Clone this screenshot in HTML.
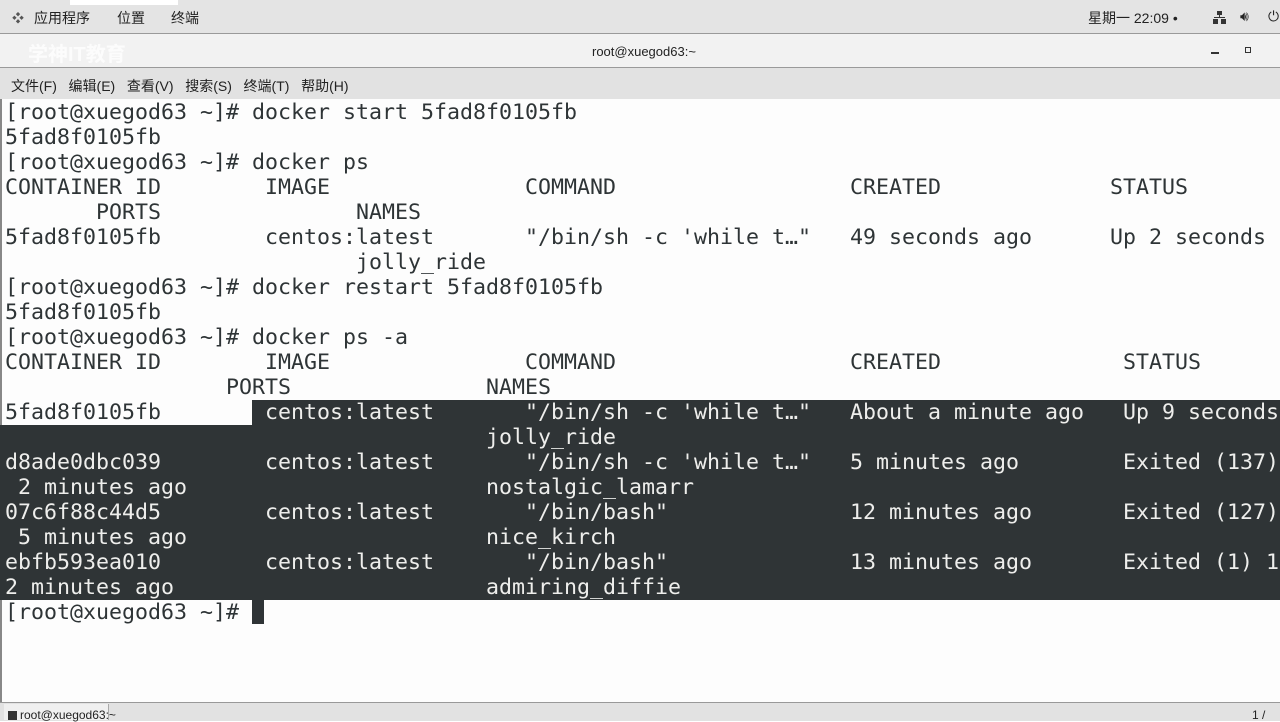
<!DOCTYPE html>
<html><head><meta charset="utf-8"><style>
body{margin:0;width:1280px;height:720px;overflow:hidden;background:#fff;position:relative;font-family:"Liberation Sans","Noto Sans CJK SC",sans-serif}
.panel{position:absolute;left:0;top:0;width:1280px;height:33px;background:#e4e4e4;border-bottom:1px solid #9a9a9a}
.title{position:absolute;left:0;top:34px;width:1280px;height:33px;background:#f2f2f2;border-bottom:1px solid #9a9a9a}
.menu{position:absolute;left:0;top:68px;width:1280px;height:31px;background:#e2e2e2}
.term{position:absolute;left:0;top:99px;width:1280px;height:603px;background:#fdfdfd;border-left:2px solid #888}
pre{position:absolute;left:5px;top:100px;margin:0;font-family:"DejaVu Sans Mono","Liberation Mono",monospace;font-size:21.6px;line-height:25px;color:#2e3436;z-index:2}
.sel{position:absolute;background:#2f3436;z-index:1}
.w{color:#eeeeec}
.task{position:absolute;left:0;top:702px;width:1280px;height:18px;background:#e2e2e2;border-top:1px solid #999}
.s{position:absolute;font-size:14px;color:#222}
</style></head><body>
<div class="panel"></div>
<div style="position:absolute;left:70px;top:0;width:108px;height:5px;background:#fff"></div>
<div class="s" style="left:12px;top:9px;font-size:12px;color:#555">❖</div>
<div class="s" style="left:34px;top:8px">应用程序</div>
<div class="s" style="left:117px;top:8px">位置</div>
<div class="s" style="left:171px;top:8px">终端</div>
<div class="s" style="left:1088px;top:8px">星期一 22:09 •</div>
<div style="position:absolute;left:1213px;top:11px;width:14px;height:13px">
<div style="position:absolute;left:4px;top:0;width:5px;height:4px;background:#333"></div>
<div style="position:absolute;left:6px;top:4px;width:1px;height:3px;background:#333"></div>
<div style="position:absolute;left:1px;top:6px;width:11px;height:1px;background:#333"></div>
<div style="position:absolute;left:0;top:8px;width:5px;height:5px;background:#333"></div>
<div style="position:absolute;left:8px;top:8px;width:5px;height:5px;background:#333"></div></div>
<div class="s" style="left:1240px;top:8px">🔊︎</div>
<div class="s" style="left:1268px;top:8px">⏻</div>
<div class="title"></div>
<div style="position:absolute;left:28px;top:38px;font-size:20px;color:#fff;font-weight:bold;opacity:.8">学神IT教育</div>
<div class="s" style="left:592px;top:44px;font-size:13px">root@xuegod63:~</div>
<div style="position:absolute;left:1211px;top:52px;width:8px;height:2px;background:#333"></div>
<div style="position:absolute;left:1245px;top:47px;width:4px;height:4px;border:1px solid #333"></div>
<div class="menu"></div>
<div class="s" style="left:11px;top:76px">文件(F)&nbsp;&nbsp; 编辑(E)&nbsp;&nbsp; 查看(V)&nbsp;&nbsp; 搜索(S)&nbsp;&nbsp; 终端(T)&nbsp;&nbsp; 帮助(H)</div>
<div class="term"></div>
<div class="sel" style="left:252px;top:400px;width:1028px;height:25px"></div>
<div class="sel" style="left:0;top:425px;width:1280px;height:175px"></div>
<div style="position:absolute;left:252px;top:600px;width:12px;height:24px;background:#2f3436"></div>
<pre>[root@xuegod63 ~]# docker start 5fad8f0105fb
5fad8f0105fb
[root@xuegod63 ~]# docker ps
CONTAINER ID        IMAGE               COMMAND                  CREATED             STATUS
       PORTS               NAMES
5fad8f0105fb        centos:latest       "/bin/sh -c 'while t…"   49 seconds ago      Up 2 seconds
                           jolly_ride
[root@xuegod63 ~]# docker restart 5fad8f0105fb
5fad8f0105fb
[root@xuegod63 ~]# docker ps -a
CONTAINER ID        IMAGE               COMMAND                  CREATED              STATUS
                 PORTS               NAMES
5fad8f0105fb       <span class="w"> centos:latest       "/bin/sh -c 'while t…"   About a minute ago   Up 9 seconds</span>
<span class="w">                                     jolly_ride
d8ade0dbc039        centos:latest       "/bin/sh -c 'while t…"   5 minutes ago        Exited (137)
 2 minutes ago                       nostalgic_lamarr
07c6f88c44d5        centos:latest       "/bin/bash"              12 minutes ago       Exited (127)
 5 minutes ago                       nice_kirch
ebfb593ea010        centos:latest       "/bin/bash"              13 minutes ago       Exited (1) 1
2 minutes ago                        admiring_diffie</span>
[root@xuegod63 ~]# </pre>
<div class="task"></div>
<div style="position:absolute;left:4px;top:704px;width:104px;height:16px;background:#f0f0f0;border-right:1px solid #aaa"></div>
<div style="position:absolute;left:8px;top:711px;width:9px;height:9px;background:#333"></div>
<div class="s" style="left:20px;top:708px;font-size:12px">root@xuegod63:~</div>
<div class="s" style="left:1252px;top:708px;font-size:12px">1 /</div>
</body></html>
